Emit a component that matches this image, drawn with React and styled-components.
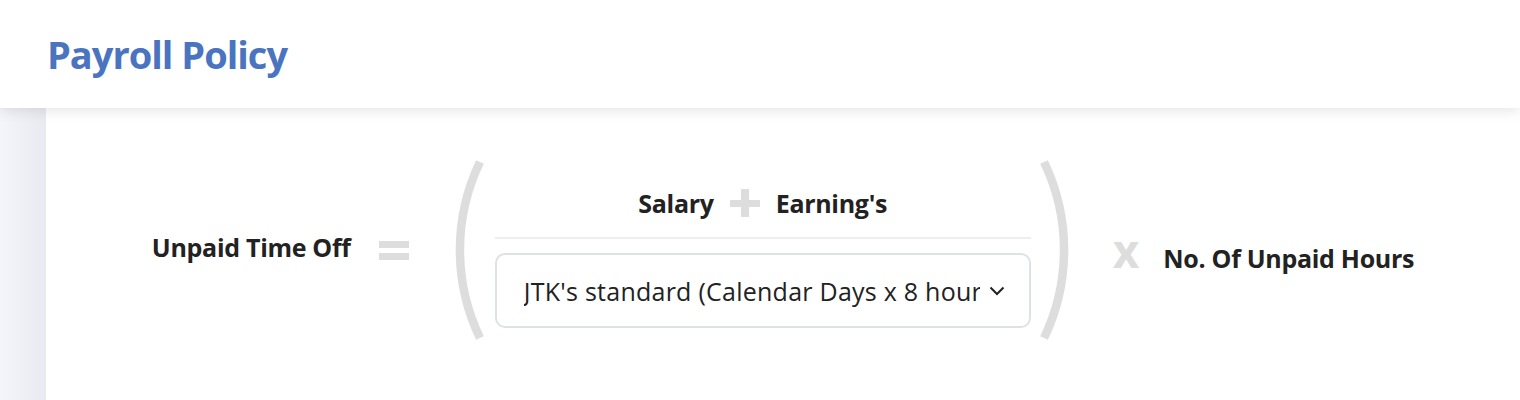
import React from "react";
import styled, { createGlobalStyle } from "styled-components";

const GlobalStyle = createGlobalStyle`
  html, body {
    margin: 0;
    padding: 0;
    background: #ffffff;
    font-family: "Open Sans", Lato, "Liberation Sans", sans-serif;
    color: #222222;
  }
`;

const Page = styled.div`
  min-height: 400px;
  display: flex;
  flex-direction: column;
`;

const Header = styled.header`
  height: 108px;
  display: flex;
  align-items: center;
  padding-left: 47px;
  background: #ffffff;
  box-shadow: 0 3px 12px rgba(0, 0, 0, 0.1);
  position: relative;
  z-index: 2;
`;

const Title = styled.h1`
  margin: 0;
  font-size: 38px;
  font-weight: 700;
  color: #4a74bf;
  letter-spacing: -1px;
`;

const Body = styled.div`
  flex: 1;
  display: flex;
`;

const SideStrip = styled.div`
  width: 46px;
  background: linear-gradient(to right, #f4f5fa, #e9eaf0);
`;

const Main = styled.main`
  flex: 1;
  display: flex;
  justify-content: center;
  align-items: flex-start;
  padding-top: 52px;
`;

const Formula = styled.div`
  display: flex;
  align-items: center;
`;

const Term = styled.span`
  font-size: 25px;
  line-height: 30px;
  font-weight: 700;
  color: #222222;
  white-space: nowrap;
  letter-spacing: -0.3px;
`;

const OuterTerm = styled(Term)`
  margin-top: ${(p) => p.$down || 0}px;
  margin-bottom: ${(p) => p.$up || 0}px;
`;

const Equals = styled.div`
  width: 30px;
  height: 5px;
  border-top: 7px solid #dddddd;
  border-bottom: 7px solid #dddddd;
  margin: 1px 42px 0 28px;
`;

const Paren = styled.svg`
  width: 36px;
  height: 180px;
  display: block;
  flex: none;
`;

const Group = styled.div`
  width: 536px;
  align-self: flex-start;
  display: flex;
  flex-direction: column;
  margin: 0 6px 0 8px;
  padding-top: 28px;
`;

const SumRow = styled.div`
  display: flex;
  justify-content: center;
  align-items: center;
  gap: 16px;
  padding-bottom: 19px;
  border-bottom: 2px solid #eeeeee;
`;

const Plus = styled.div`
  width: 30px;
  height: 28px;
  position: relative;
  &::before,
  &::after {
    content: "";
    position: absolute;
    background: #dddddd;
  }
  &::before {
    left: 0;
    right: 0;
    top: 11px;
    height: 7px;
  }
  &::after {
    top: 0;
    bottom: 0;
    left: 11px;
    width: 8px;
  }
`;

const SelectBox = styled.div`
  box-sizing: border-box;
  margin-top: 14px;
  height: 75px;
  border: 2px solid #dde2e6;
  border-radius: 10px;
  display: flex;
  align-items: center;
  padding: 0 24px 0 27px;
  gap: 9px;
`;

const SelectText = styled.span`
  flex: 1;
  font-size: 25px;
  font-weight: 400;
  color: #222222;
  white-space: nowrap;
  overflow: hidden;
  letter-spacing: 0.25px;
`;

const Times = styled.span`
  font-size: 46px;
  font-weight: 700;
  color: #dddddd;
  margin: 0 24px 0 40px;
  line-height: 1;
`;

const Chevron = () => (
  <svg width="16" height="10" viewBox="0 0 16 10">
    <path d="M1.5 1.5 L8 8 L14.5 1.5" fill="none" stroke="#222" strokeWidth="2" />
  </svg>
);

const LeftParen = () => (
  <Paren viewBox="0 0 36 180">
    <path d="M29 2 A203 203 0 0 0 29 178" fill="none" stroke="#dddddd" strokeWidth="8.5" />
  </Paren>
);

const RightParen = () => (
  <Paren viewBox="0 0 36 180">
    <path d="M7 2 A203 203 0 0 1 7 178" fill="none" stroke="#dddddd" strokeWidth="8.5" />
  </Paren>
);

const App = () => {
  return (
    <Page>
      <GlobalStyle />
      <Header>
        <Title>Payroll Policy</Title>
      </Header>
      <Body>
        <SideStrip />
        <Main>
          <Formula>
            <OuterTerm $up={6}>Unpaid Time Off</OuterTerm>
            <Equals />
            <LeftParen />
            <Group>
              <SumRow>
                <Term>Salary</Term>
                <Plus />
                <Term>Earning's</Term>
              </SumRow>
              <SelectBox>
                <SelectText>JTK's standard (Calendar Days x 8 hours)</SelectText>
                <Chevron />
              </SelectBox>
            </Group>
            <RightParen />
            <Times>x</Times>
            <OuterTerm $down={15}>No. Of Unpaid Hours</OuterTerm>
          </Formula>
        </Main>
      </Body>
    </Page>
  );
};

export default App;
